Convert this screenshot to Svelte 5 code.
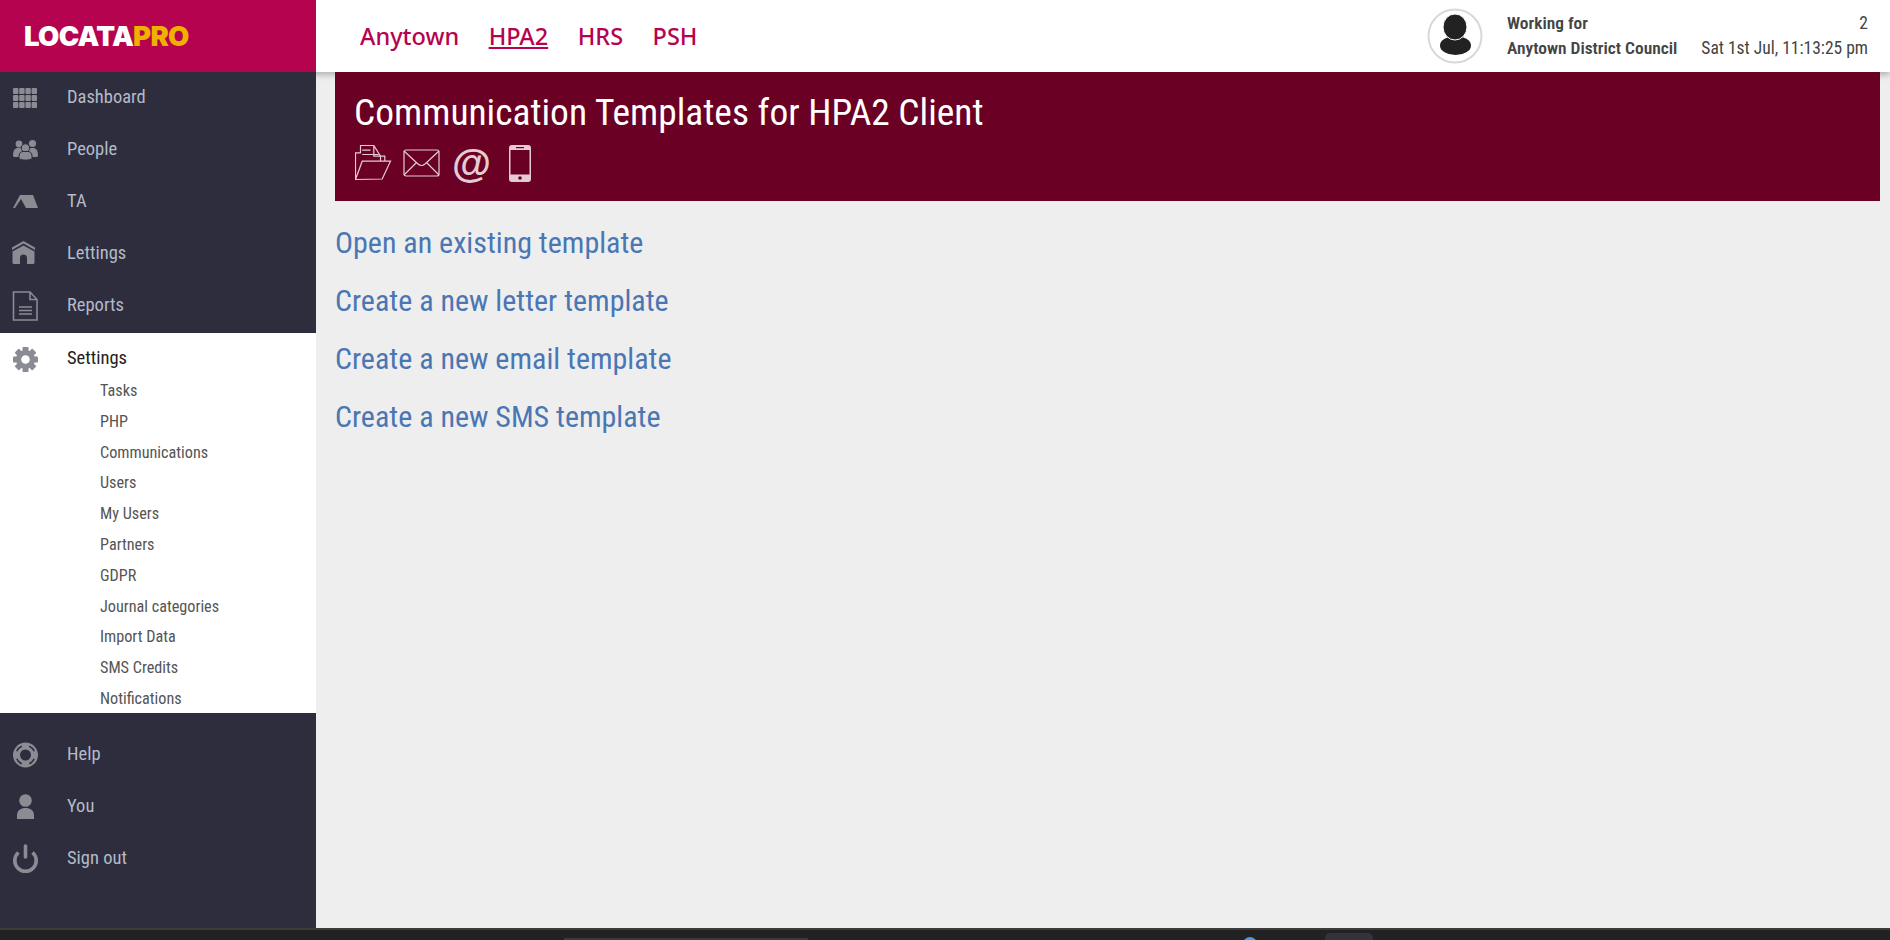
<script lang="ts">
  const topMenu = [
    { label: "Dashboard", icon: "grid" },
    { label: "People", icon: "people" },
    { label: "TA", icon: "tent" },
    { label: "Lettings", icon: "house" },
    { label: "Reports", icon: "doc" }
  ];
  const subMenu = ["Tasks", "PHP", "Communications", "Users", "My Users", "Partners", "GDPR", "Journal categories", "Import Data", "SMS Credits", "Notifications"];
  const bottomMenu = [
    { label: "Help", icon: "help" },
    { label: "You", icon: "you" },
    { label: "Sign out", icon: "power" }
  ];
  const clients = ["Anytown", "HPA2", "HRS", "PSH"];
  const links = ["Open an existing template", "Create a new letter template", "Create a new email template", "Create a new SMS template"];
</script>

{#snippet icon(name)}
  <svg class="ic" viewBox="0 0 26 28" width="26" height="28">
    {#if name === "grid"}
      {#each [0, 1, 2] as r}
        {#each [0, 1, 2, 3] as c}
          <rect x={1 + c * 6.2} y={6 + r * 7} width="5.4" height="6" rx="1" fill="#8b8b94" />
        {/each}
      {/each}
    {:else if name === "people"}
      <g fill="#8b8b94">
        <circle cx="7" cy="10" r="3.400" /><circle cx="20.500" cy="9.500" r="3.600" />
        <path d="M1 22c0-6 2-8 5-8h4v9H2z" /><path d="M26 22c0-6-2-8-5-8h-4v9h8z" />
        <circle cx="13.500" cy="14" r="4.200" stroke="#2d2d3d" /><path d="M7 25v-3c0-3 2-4.500 4-4.500h5c2 0 4 1.500 4 4.500v3c-4 1.500-9 1.500-13 0z" stroke="#2d2d3d" />
      </g>
    {:else if name === "tent"}
      <path d="M1 22 L8 9 H21 L26 22 H14 L9 13 L3 22 Z" fill="#8b8b94" />
    {:else if name === "house"}
      <path d="M11.500 3 L23 9.500 V12 L11.500 5.600 L0 12 V9.500 Z" fill="#8b8b94" />
      <path fill-rule="evenodd" d="M11.500 7.500 L22.500 13.500 V24.500 a1.500 1.500 0 0 1-1.500 1.500 H15 V20 a3.500 3.500 0 0 0-7 0 V26 H2 A1.500 1.500 0 0 1 .5 24.500 V13.500 Z" fill="#8b8b94" />
    {:else if name === "doc"}
      <path d="M1.500 2 H18 L25 9.500 V30 H1.500 Z M18 2 V9.500 H25 M7 17 H20 M7 20.500 H20 M7 24 H20" fill="none" stroke="#8b8b94" stroke-width="1.600" />
    {:else if name === "gear"}
      <g fill="#8b8b94">
        {#each [0, 45, 90, 135, 180, 225, 270, 315] as a}
          <rect x="10.500" y="4" width="6" height="5" rx="0.800" transform={`rotate(${a} 13.500 16.500)`} />
        {/each}
        <circle cx="13.500" cy="16.500" r="9.500" />
      </g>
      <circle cx="13.500" cy="16.500" r="4.300" fill="#fff" />
    {:else if name === "help"}
      <circle cx="13.500" cy="16" r="9" fill="none" stroke="#8b8b94" stroke-width="7" />
      <g fill="none" stroke="#2d2d3d" stroke-width="1.500">
        <path d="M17.210 7.260 A9.500 9.500 0 0 1 22.240 12.290" />
        <path d="M22.240 19.710 A9.500 9.500 0 0 1 17.210 24.740" />
        <path d="M9.790 24.740 A9.500 9.500 0 0 1 4.760 19.710" />
        <path d="M4.760 12.290 A9.500 9.500 0 0 1 9.790 7.260" />
      </g>
    {:else if name === "you"}
      <g fill="#8b8b94"><circle cx="13.500" cy="9.500" r="6.300" /><path d="M5 28 V24 C5 19.500 9 17 13.500 17 C18 17 22 19.500 22 24 V28 Z" /></g>
    {:else if name === "power"}
      <g fill="none" stroke="#8b8b94" stroke-width="3.600">
        <path d="M6.500 9.500 A10.700 10.700 0 1 0 20.500 9.500" /><path stroke-linecap="round" d="M13.500 3 V14" />
      </g>
    {/if}
  </svg>
{/snippet}

<div class="page">
  <header class="topbar">
    <div class="brand"><span class="logo">LOCATA<span class="pro">PRO</span></span></div>
    <nav class="clients">
      {#each clients as c}
        <a href="#top" class:current={c === "HPA2"}>{c}</a>
      {/each}
    </nav>
    <div class="status">
      <div class="avatar">
        <svg viewBox="0 0 56 56" width="56" height="56">
          <circle cx="28" cy="28" r="26.500" fill="#fff" stroke="#ddd6d8" stroke-width="2" />
          <ellipse cx="28.500" cy="37.500" rx="15.500" ry="9.500" fill="#222" />
          <ellipse cx="28" cy="19" rx="12" ry="13" fill="#222" stroke="#fff" stroke-width="1" />
        </svg>
      </div>
      <div class="working"><div>Working for</div><div>Anytown District Council</div></div>
      <div class="clock"><div>2</div><div>Sat 1st Jul, 11:13:25 pm</div></div>
    </div>
  </header>

  <div class="body">
    <aside class="sidebar">
      <ul class="menu upper">
        {#each topMenu as m}
          <li class="item">{@render icon(m.icon)}<span>{m.label}</span></li>
        {/each}
      </ul>
      <div class="open">
        <div class="item active">{@render icon("gear")}<span>Settings</span></div>
        <ul class="sub">
          {#each subMenu as s}<li>{s}</li>{/each}
        </ul>
      </div>
      <ul class="menu lower">
        {#each bottomMenu as m}
          <li class="item">{@render icon(m.icon)}<span>{m.label}</span></li>
        {/each}
      </ul>
    </aside>

    <main class="content">
      <section class="banner">
        <h1>Communication Templates for HPA2 Client</h1>
        <div class="tools">
          <svg viewBox="-0.500 -0.500 37 36" width="37" height="36" fill="none" stroke="#e5ccd4" stroke-width="1.200">
            <path d="M0 34 V7.300 H5 V0 H18.300 L25 10.700 V15.700 M18.300 0 V10.700 H25 M25 10.700 H29.300 V15.700 M6.700 4.700 H15 M6.700 9 H23 M0 34 L6.700 15.700 H35 L26.700 33.500 Z" />
          </svg>
          <svg viewBox="0 0 37 28" width="37" height="28" fill="none" stroke="#e5ccd4" stroke-width="1.200">
            <rect x="1" y="1" width="35" height="26" rx="2" />
            <path d="M1 2 L15 15 Q18.500 18 22 15 L36 2 M1 26 L13 14 M36 26 L24 14" />
          </svg>
          <span class="at">@</span>
          <svg class="phone" viewBox="0 0 22 37" width="22" height="37">
            <path fill-rule="evenodd" fill="#e5ccd4" d="M3 0 H19 A3 3 0 0 1 22 3 V34 A3 3 0 0 1 19 37 H3 A3 3 0 0 1 0 34 V3 A3 3 0 0 1 3 0 Z M1.500 5 V29.500 H20.500 V5 Z" />
            <rect x="7" y="2" width="8" height="1.200" fill="#6a0023" /><circle cx="11" cy="33" r="1.800" fill="#6a0023" />
          </svg>
        </div>
      </section>
      <div class="links">
        {#each links as l}<a href="#top">{l}</a>{/each}
      </div>
    </main>
  </div>

  <div class="osbar">
    <span class="os-tab"></span><span class="os-dot"></span><span class="os-box"></span>
  </div>
</div>

<style>
  :global(body) {
    margin: 0;
    background: #eeeeee;
    overflow: hidden;
  }
  .page {
    width: 1890px;
    height: 940px;
    display: flex;
    flex-direction: column;
    font-family: Roboto, "Liberation Sans", sans-serif;
    font-stretch: 75%;
    overflow: hidden;
  }
  ul {
    list-style: none;
    margin: 0;
    padding: 0;
  }
  a {
    text-decoration: none;
  }

  .topbar {
    height: 72px;
    flex: none;
    display: flex;
    background: #fff;
    position: relative;
    z-index: 1;
    box-shadow: 0 3px 6px rgba(0, 0, 0, 0.25);
  }
  .brand {
    width: 316px;
    background: #b50350;
    display: flex;
    align-items: center;
    padding-left: 24px;
    box-sizing: border-box;
  }
  .logo {
    font-family: Inter, sans-serif;
    font-stretch: normal;
    font-weight: 900;
    font-size: 27.500px;
    letter-spacing: -0.700px;
    color: #fff;
  }
  .pro {
    color: #eeb100;
  }
  .clients {
    display: flex;
    align-items: center;
    gap: 29.500px;
    padding-left: 44px;
    flex: 1;
  }
  .clients a {
    font-family: "Noto Sans", sans-serif;
    font-stretch: normal;
    font-weight: 500;
    font-size: 23.500px;
    color: #b50350;
  }
  .clients a.current {
    text-decoration: underline;
  }
  .status {
    display: flex;
    align-items: center;
    padding-right: 22px;
    color: #444;
  }
  .avatar {
    display: flex;
    margin-right: 24px;
  }
  .working {
    font-size: 17.400px;
    font-weight: 600;
    line-height: 25px;
    color: #444;
    margin-right: 24px;
  }
  .clock {
    font-size: 17.500px;
    text-align: right;
    line-height: 25px;
  }

  .body {
    flex: 1;
    display: flex;
    min-height: 0;
  }
  .sidebar {
    width: 316px;
    flex: none;
    background: #2d2d3d;
    position: relative;
    z-index: 2;
  }
  .upper {
    margin-top: -2px;
    padding-bottom: 3px;
  }
  .item {
    display: flex;
    align-items: center;
    height: 52px;
    padding-left: 12px;
    font-size: 18.500px;
    color: #b4bac9;
  }
  .item span {
    margin-top: 1px;
  }
  .item .ic {
    margin-right: 29px;
    flex: none;
    overflow: visible;
  }
  .open {
    background: #fff;
    height: 380px;
  }
  .item.active {
    color: #222;
    height: 48px;
  }
  .sub {
    padding-left: 100px;
    margin-top: -5px;
  }
  .sub li {
    height: 30.800px;
    line-height: 30.800px;
    font-size: 16.200px;
    color: #555;
  }
  .lower {
    padding-top: 14px;
  }

  .content {
    flex: 1;
    padding: 0 10px 0 19px;
    min-width: 0;
  }
  .banner {
    height: 129px;
    background: #6a0023;
    padding: 18px 20px 0;
    box-sizing: border-box;
    position: relative;
    z-index: 3;
  }
  h1 {
    margin: 0 0 0 -1px;
    font-size: 37.450px;
    font-weight: 400;
    line-height: 44px;
    color: #fff;
  }
  .tools {
    display: flex;
    align-items: center;
    gap: 11px;
    margin-top: 10px;
    height: 38px;
  }
  .at {
    font-family: "Liberation Sans", sans-serif;
    font-stretch: normal;
    font-size: 40px;
    font-weight: 700;
    line-height: 38px;
    color: #e5ccd4;
    margin-left: 1px;
  }
  .phone {
    margin-left: 7px;
  }
  .links {
    display: flex;
    flex-direction: column;
    padding-top: 13px;
  }
  .links a {
    height: 58px;
    line-height: 58px;
    font-size: 30px;
    color: #4a76b4;
  }

  .osbar {
    height: 12px;
    flex: none;
    background: #222;
    border-top: 2px solid #3c3c3c;
    box-sizing: border-box;
    position: relative;
    z-index: 4;
  }
  .os-tab {
    position: absolute;
    left: 564px;
    top: 8px;
    width: 244px;
    height: 4px;
    background: #3a3a3a;
  }
  .os-dot {
    position: absolute;
    left: 1243px;
    top: 7px;
    width: 14px;
    height: 14px;
    border-radius: 50%;
    background: #4a9ae8;
  }
  .os-box {
    position: absolute;
    left: 1325px;
    top: 3px;
    width: 48px;
    height: 20px;
    border-radius: 5px;
    background: #33333c;
  }
</style>
